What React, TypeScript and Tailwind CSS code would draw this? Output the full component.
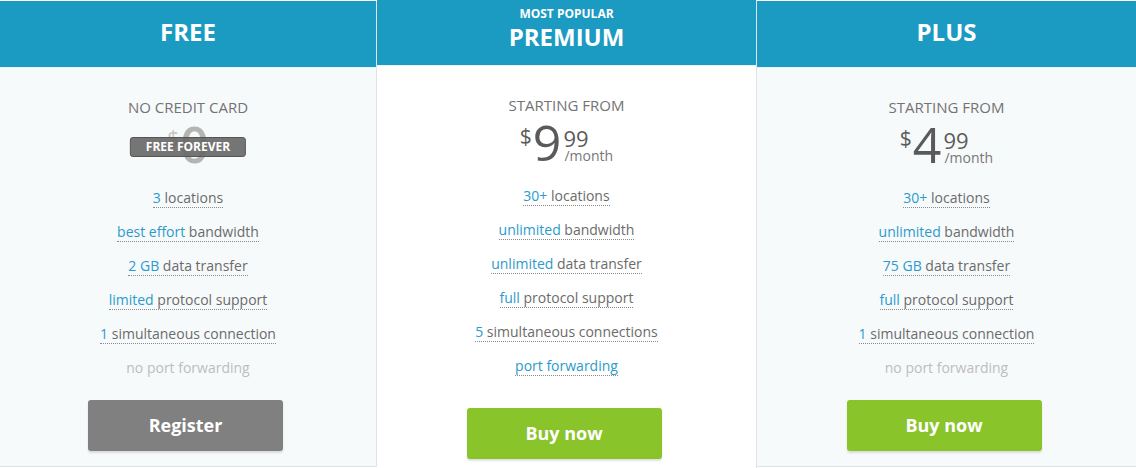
import React from "react";

type Feature = { hi?: string; rest?: string; off?: boolean };

interface Plan {
  name: string;
  popular?: boolean;
  label: string;
  price: string | null;
  cta: string;
  ctaTone: "gray" | "green";
  features: Feature[];
}

const PLANS: Plan[] = [
  {
    name: "FREE",
    label: "NO CREDIT CARD",
    price: null,
    cta: "Register",
    ctaTone: "gray",
    features: [
      { hi: "3", rest: " locations" },
      { hi: "best effort", rest: " bandwidth" },
      { hi: "2 GB", rest: " data transfer" },
      { hi: "limited", rest: " protocol support" },
      { hi: "1", rest: " simultaneous connection" },
      { rest: "no port forwarding", off: true },
    ],
  },
  {
    name: "PREMIUM",
    popular: true,
    label: "STARTING FROM",
    price: "9",
    cta: "Buy now",
    ctaTone: "green",
    features: [
      { hi: "30+", rest: " locations" },
      { hi: "unlimited", rest: " bandwidth" },
      { hi: "unlimited", rest: " data transfer" },
      { hi: "full", rest: " protocol support" },
      { hi: "5", rest: " simultaneous connections" },
      { hi: "port forwarding" },
    ],
  },
  {
    name: "PLUS",
    label: "STARTING FROM",
    price: "4",
    cta: "Buy now",
    ctaTone: "green",
    features: [
      { hi: "30+", rest: " locations" },
      { hi: "unlimited", rest: " bandwidth" },
      { hi: "75 GB", rest: " data transfer" },
      { hi: "full", rest: " protocol support" },
      { hi: "1", rest: " simultaneous connection" },
      { rest: "no port forwarding", off: true },
    ],
  },
];

function Price({ big, free }: { big: string; free?: boolean }) {
  const tone = free ? "text-[#c4c4c4]" : "text-[#5a5a5a]";
  return (
    <div className="relative mt-[2px] flex justify-center">
      <span className={`mt-[9px] mr-[1px] text-[21px] leading-none ${tone}`}>$</span>
      <span className={`text-[50px] leading-[50px] ${free ? "text-[#b4b4b4] font-semibold" : tone}`}>{big}</span>
      {!free && (
        <div className="ml-[2px] flex flex-col items-start">
          <span className="mt-[10px] text-[22px] leading-none text-[#5a5a5a]">99</span>
          <span className="ml-[1px] text-[14px] leading-none text-[#777]">/month</span>
        </div>
      )}
      {free && (
        <span className="absolute top-[18px] left-1/2 -translate-x-1/2 whitespace-nowrap h-[20px] px-[15px] rounded-[3px] border border-[#555] bg-[#666]/90 text-[12px] leading-[18px] font-bold text-white">
          FREE FOREVER
        </span>
      )}
    </div>
  );
}

function PlanCard({ plan }: { plan: Plan }) {
  const mid = !!plan.popular;
  const first = plan.name === "FREE";
  return (
    <div
      className={
        mid
          ? "w-[380px] self-stretch flex flex-col bg-white border-r border-[#dde5e6]"
          : `${first ? "w-[377px] border-r" : "flex-1"} mt-px h-[466px] flex flex-col bg-[#f7fafb] border-b border-[#dde5e6]`
      }
    >
      <div
        className={`bg-[#1b9ac2] border-b border-[#e8f3f7] text-white text-center font-bold ${mid ? "h-[66px]" : "h-[67px]"}`}
      >
        {mid ? (
          <>
            <div className="pt-[7px] text-[12px] leading-[14px]">MOST POPULAR</div>
            <div className="text-[24px] leading-[32px]">{plan.name}</div>
          </>
        ) : (
          <div className="pt-[15px] text-[24px] leading-[32px]">{plan.name}</div>
        )}
      </div>

      <div className="flex flex-col items-center pt-[29px]">
        <div className="text-[15px] leading-[20px] text-[#737373]">{plan.label}</div>
        <Price big={plan.price ?? "0"} free={plan.price === null} />

        <ul className="mt-[12px] flex flex-col items-center">
          {plan.features.map((f, i) => (
            <li key={i} className="h-[34px] flex items-center text-[14px]">
              {f.off ? (
                <span className="leading-[18px] text-[#bdbdbd]">{f.rest}</span>
              ) : (
                <span className="leading-[18px] border-b border-dotted border-[#8a8a8a]">
                  <span className="text-[#2a9bcb]">{f.hi}</span>
                  <span className="text-[#6b6b6b]">{f.rest}</span>
                </span>
              )}
            </li>
          ))}
        </ul>

        <button
          className={`${mid ? "mt-[25px]" : "mt-[15px]"} mr-[5px] w-[195px] h-[51px] rounded-[3px] text-white text-[18px] font-bold shadow-[0_2px_2px_rgba(0,0,0,0.12)] ${
            plan.ctaTone === "gray" ? "bg-[#808080]" : "bg-[#8ac42b]"
          }`}
        >
          {plan.cta}
        </button>
      </div>
    </div>
  );
}

export default function App() {
  return (
    <div className="w-[1136px] h-[468px] flex items-start bg-white overflow-hidden font-['Open_Sans',sans-serif]">
      {PLANS.map((p) => (
        <PlanCard key={p.name} plan={p} />
      ))}
    </div>
  );
}
